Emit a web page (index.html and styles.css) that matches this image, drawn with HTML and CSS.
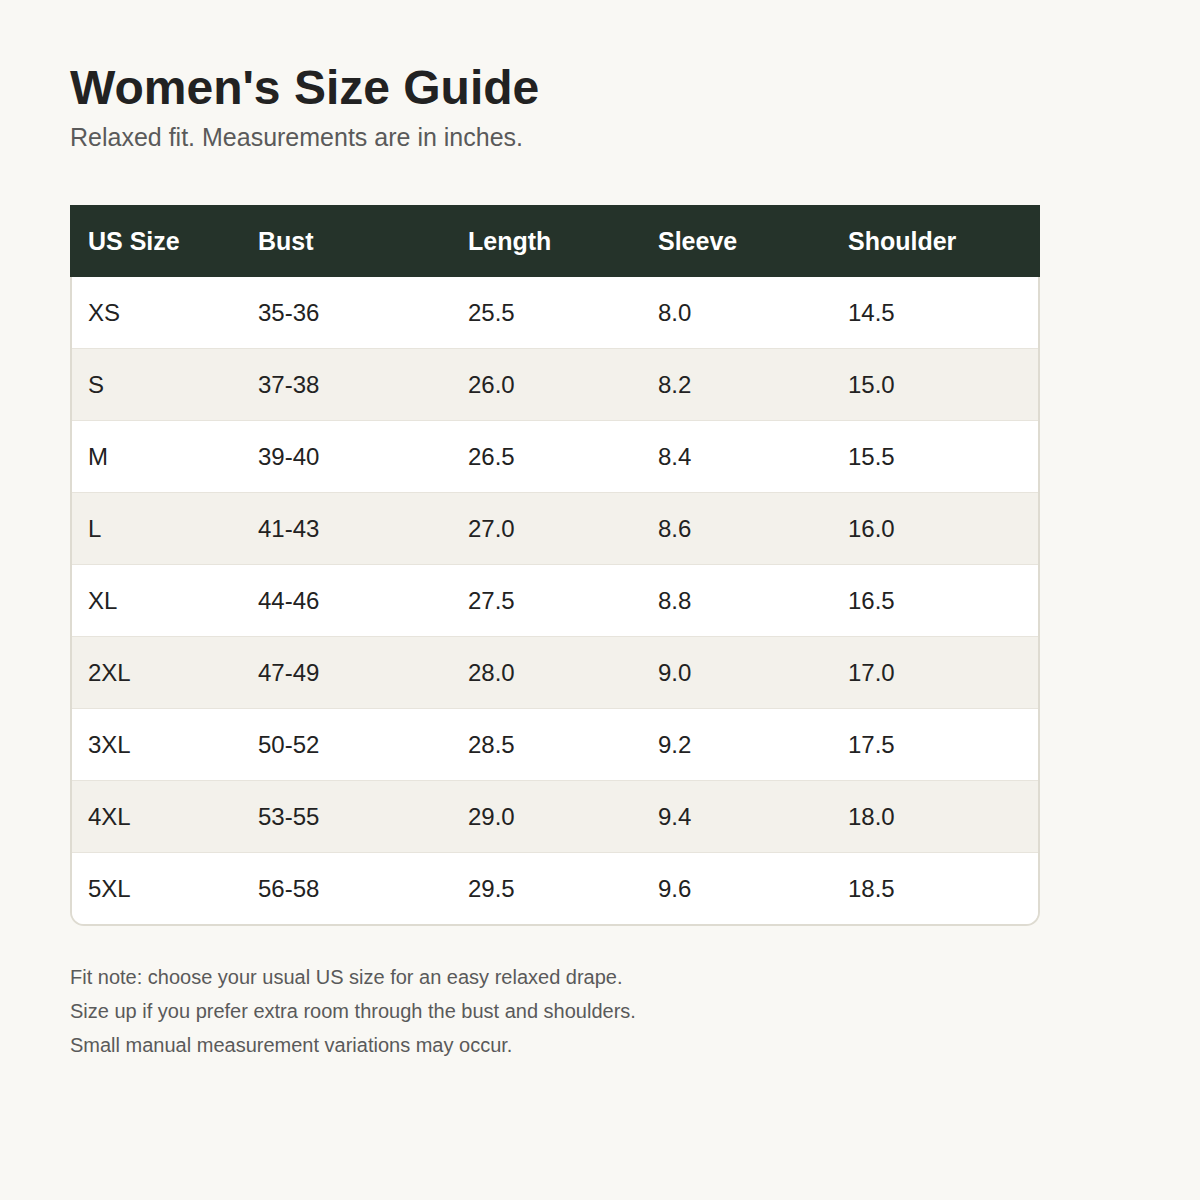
FILE: index.html
```html
<!DOCTYPE html>
<html lang="en">
<head>
    <meta charset="UTF-8">
    <title>Women's Size Guide</title>
    <link rel="stylesheet" href="styles.css">
</head>
<body>
    <div class="page">
        <h1 class="title">Women's Size Guide</h1>
        <p class="subtitle">Relaxed fit. Measurements are in inches.</p>

        <div class="chart">
            <div class="row head">
                <div>US Size</div><div>Bust</div><div>Length</div><div>Sleeve</div><div>Shoulder</div>
            </div>
            <div class="body">
                <div class="row"><div>XS</div><div>35-36</div><div>25.5</div><div>8.0</div><div>14.5</div></div>
                <div class="row"><div>S</div><div>37-38</div><div>26.0</div><div>8.2</div><div>15.0</div></div>
                <div class="row"><div>M</div><div>39-40</div><div>26.5</div><div>8.4</div><div>15.5</div></div>
                <div class="row"><div>L</div><div>41-43</div><div>27.0</div><div>8.6</div><div>16.0</div></div>
                <div class="row"><div>XL</div><div>44-46</div><div>27.5</div><div>8.8</div><div>16.5</div></div>
                <div class="row"><div>2XL</div><div>47-49</div><div>28.0</div><div>9.0</div><div>17.0</div></div>
                <div class="row"><div>3XL</div><div>50-52</div><div>28.5</div><div>9.2</div><div>17.5</div></div>
                <div class="row"><div>4XL</div><div>53-55</div><div>29.0</div><div>9.4</div><div>18.0</div></div>
                <div class="row"><div>5XL</div><div>56-58</div><div>29.5</div><div>9.6</div><div>18.5</div></div>
            </div>
        </div>

        <div class="notes">
            <p>Fit note: choose your usual US size for an easy relaxed drape.</p>
            <p>Size up if you prefer extra room through the bust and shoulders.</p>
            <p>Small manual measurement variations may occur.</p>
        </div>
    </div>
</body>
</html>
```

FILE: styles.css
```css
body {
    margin: 0;
    background-color: #f9f8f4;
    font-family: "Liberation Sans", Arial, sans-serif;
    color: #222;
}
.page {
    padding: 60px 70px;
}
.title {
    margin: 0;
    font-size: 48px;
    line-height: 56px;
    font-weight: bold;
    color: #222;
}
.subtitle {
    margin: 6px 0 0;
    font-size: 25px;
    line-height: 30px;
    color: #5a5a5a;
}
.chart {
    width: 970px;
    margin-top: 53px;
}
.row {
    display: grid;
    grid-template-columns: 170px 210px 190px 190px 1fr;
    height: 72px;
    align-items: center;
    font-size: 24px;
}
.row > div {
    padding-left: 18px;
}
.head {
    background-color: #25332a;
    color: #fff;
    font-weight: bold;
    font-size: 25px;
}
.body {
    border: 2px solid #dedbd1;
    border-top: none;
    border-radius: 0 0 14px 14px;
    overflow: hidden;
}
.body .row {
    grid-template-columns: 168px 210px 190px 190px 1fr;
    background-color: #fff;
    border-bottom: 1px solid #e7e4dc;
    height: 71px;
}
.body .row > div:first-child {
    padding-left: 16px;
}
.body .row:nth-child(even) {
    background-color: #f3f1eb;
}
.body .row:last-child {
    border-bottom: none;
}
.notes {
    margin-top: 34px;
    color: #5a5a5a;
    font-size: 20px;
}
.notes p {
    margin: 0;
    line-height: 34px;
}
```
